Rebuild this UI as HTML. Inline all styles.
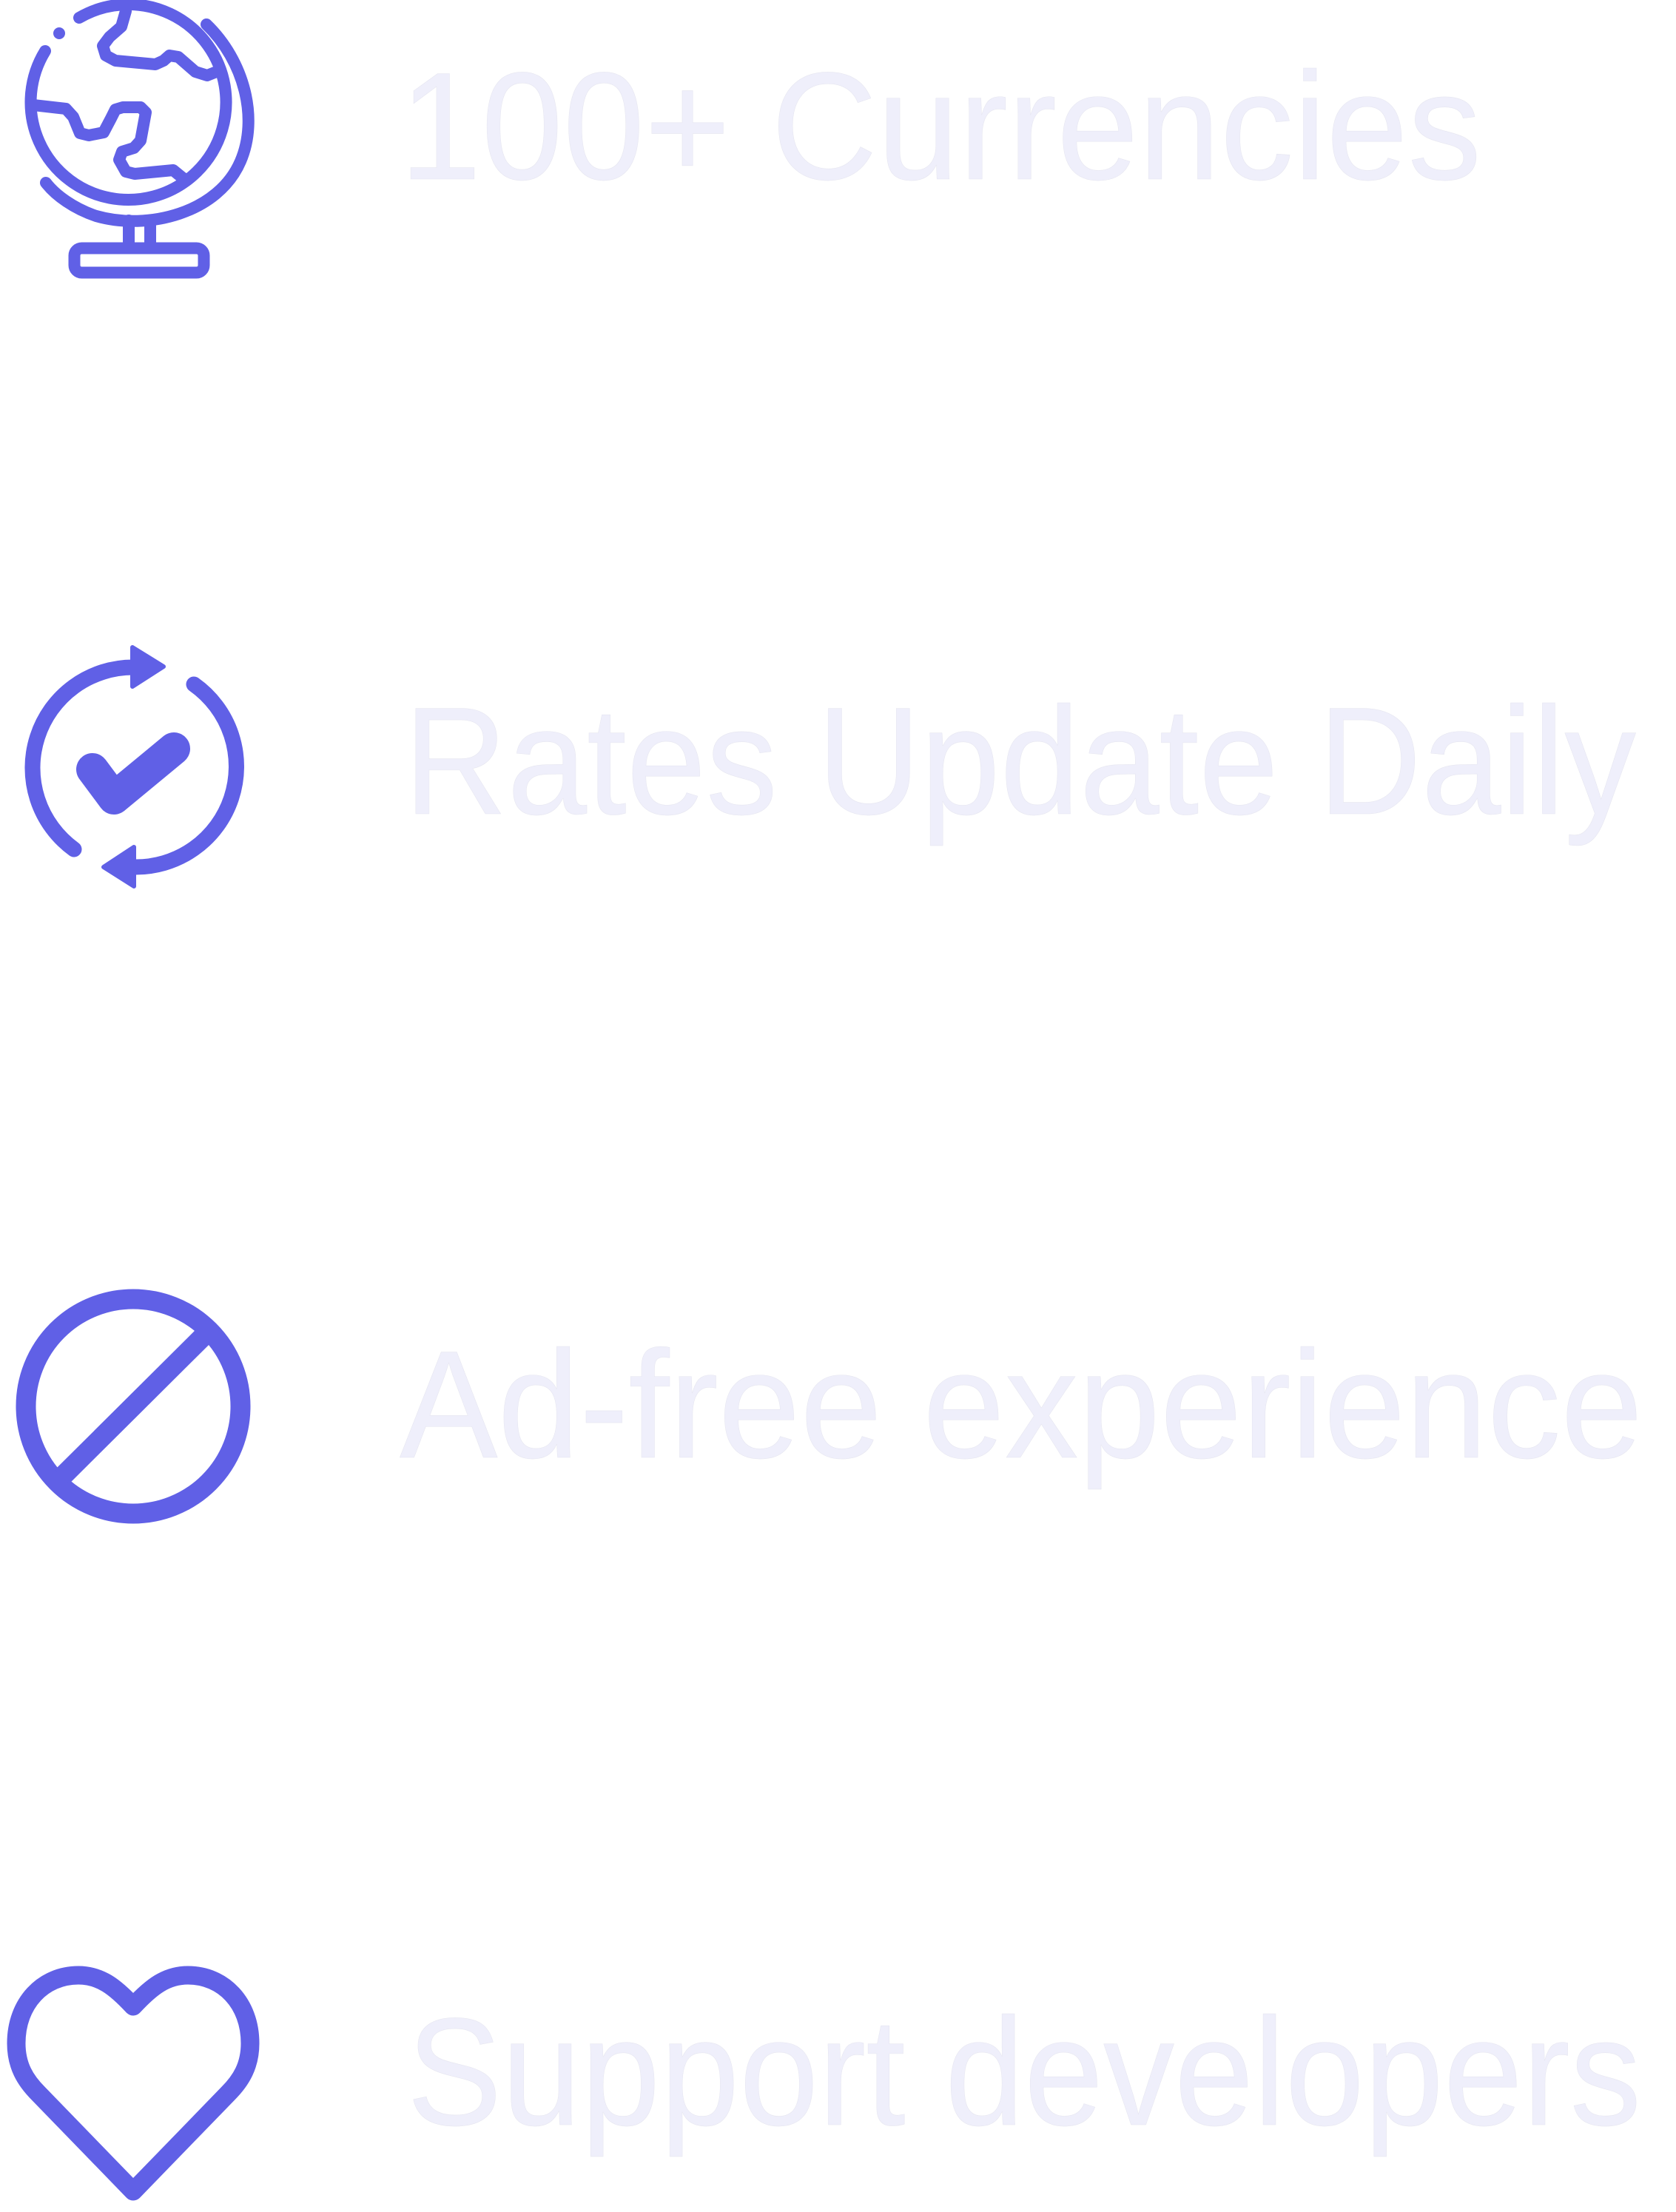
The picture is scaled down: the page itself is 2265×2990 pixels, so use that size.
<!DOCTYPE html>
<html><head><meta charset="utf-8"><style>
html,body{margin:0;padding:0;background:#fff;}
svg{display:block;}
</style></head><body>
<svg width="2265" height="2990" viewBox="0 0 2265 2990" xmlns="http://www.w3.org/2000/svg">
<rect width="2265" height="2990" fill="#fff"/>
<g fill="none" stroke="#6060e6" stroke-linecap="round" stroke-linejoin="round">
 <!-- globe -->
 <g stroke-width="16">
  <path d="M107,24 A132,132 0 1 1 61,69"/>
  <path d="M279,33 C330,82 350,160 325,218 C295,288 200,312 130,292 C100,282 75,264 62,247"/>
  <path d="M170,15 L164,36 L148,50 L139,62 L143,75 L156,82 L210,87 L221,82 L229,75 L241,77 L264,97 L280,102 L295,96"/>
  <path d="M45,142 L89,147 L99,158 L108,180 L120,183 L140,179 L150,160 L156,148 L166,145 L190,145 L197,152 L190,190 L181,200 L165,205 L161,216 L170,232 L182,235 L234,230 L245,239 L252,244"/>
  <rect x="100.5" y="335.5" width="175" height="33" rx="10"/>
  <path d="M174,298 V333 M203,298 V333"/>
 </g>
 <circle cx="80" cy="45" r="8" fill="#6060e6" stroke="none"/>
 <!-- refresh -->
 <g stroke-width="21">
  <path d="M180,902 A136,136 0 0 0 100,1148"/>
  <path d="M262,925 A136,136 0 0 1 180,1172"/>
 </g>
 <path d="M179,875 L221,901 L179,928 Z M181,1145 L140,1172 L181,1198 Z" fill="#6060e6" stroke-width="6"/>
 <path d="M125,1040 L154,1079 L235,1012" stroke-width="44"/>
 <!-- no sign -->
 <circle cx="180" cy="1901" r="145" stroke-width="27"/>
 <path d="M84,1996 L275,1806" stroke-width="27" stroke-linecap="butt"/>
 <!-- heart -->
 <path d="M180,2712 C155,2685 135,2670 106,2670 C58,2670 22,2708 22,2762 C22,2792 34,2812 52,2830 L180,2962 L308,2830 C326,2812 338,2792 338,2762 C338,2708 302,2670 254,2670 C225,2670 205,2685 180,2712 Z" stroke-width="25"/>
</g>
<g font-family="'Liberation Sans', Arial, sans-serif" font-size="207" fill="#efeffb" stroke="#e6e6f0" stroke-width="0.6">
 <text x="540" y="242" textLength="1462" lengthAdjust="spacingAndGlyphs">100+ Currencies</text>
 <text x="546" y="1100" textLength="1665" lengthAdjust="spacingAndGlyphs">Rates Update Daily</text>
 <text x="540" y="1970" textLength="1680" lengthAdjust="spacingAndGlyphs">Ad-free experience</text>
 <text x="550" y="2872" textLength="1668" lengthAdjust="spacingAndGlyphs">Support developers</text>
</g>
</svg>
</body></html>
